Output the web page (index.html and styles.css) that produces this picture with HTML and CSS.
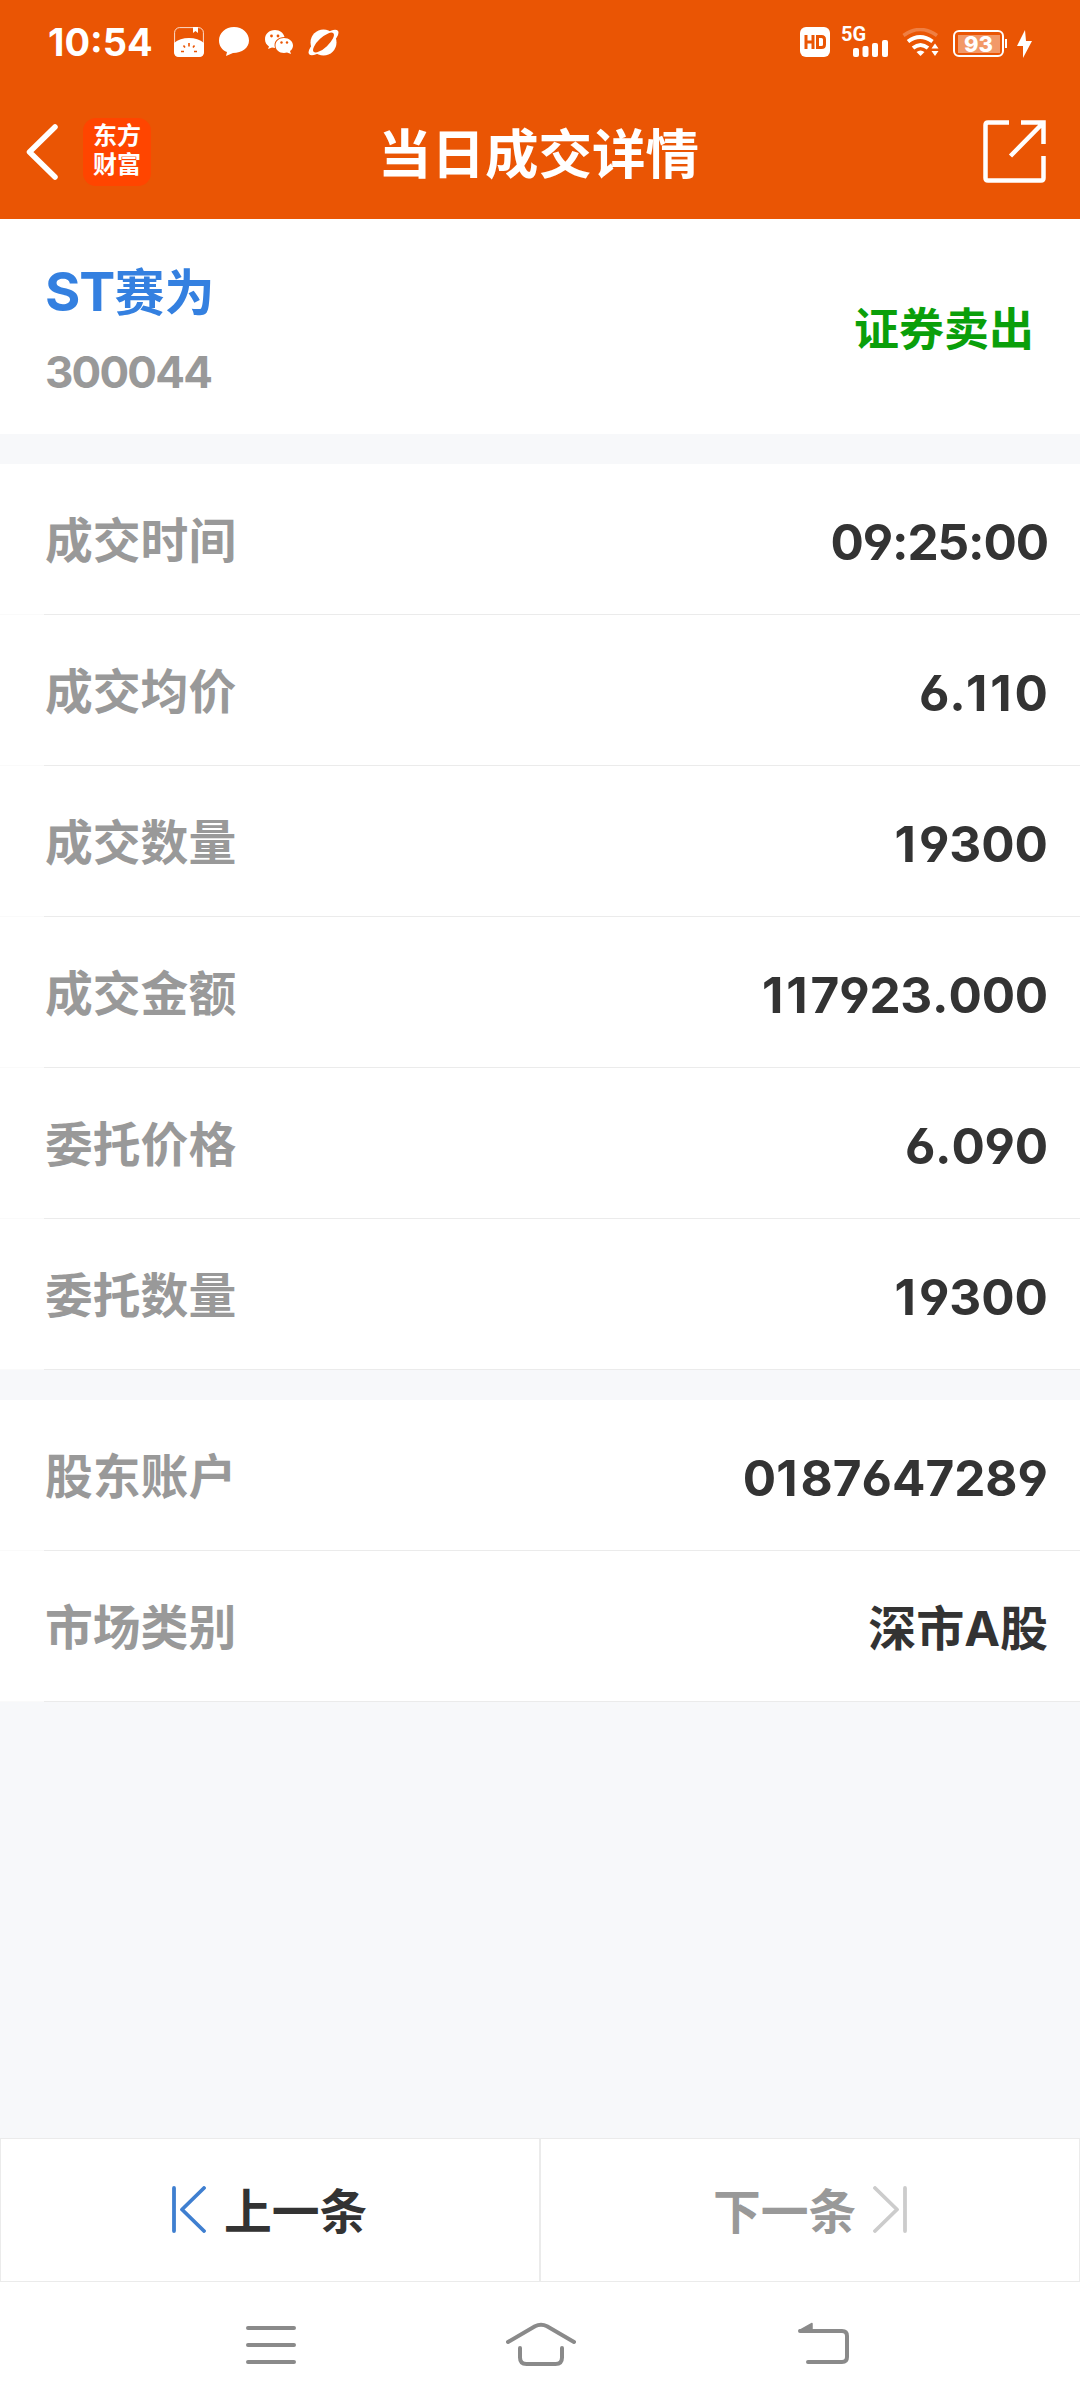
FILE: index.html
```html
<!DOCTYPE html>
<html lang="zh-CN">
<head>
<meta charset="utf-8">
<title>当日成交详情</title>
<link rel="stylesheet" href="styles.css">
</head>
<body>
<header class="header">
  <div class="status">
    <div class="status-left">
      <span class="clock">10:54</span>
      <svg width="30" height="30" viewBox="0 0 30 30"><rect x=".6" y=".6" width="28.8" height="28.8" rx="5" fill="none" stroke="#fff" stroke-opacity=".8"/><path d="M19 0h5v6l-2.500-2L19 6zM0 16Q6 11 15 11t15 5v9q0 5-5 5H5q-5 0-5-5z" fill="#fff"/><path d="M15 16v3.500M9.500 18.500l1.500 2M20.500 18.500l-1.500 2M7 24.500h3M20 24.500h3" stroke="#ea5504" stroke-width="1.600"/></svg>
      <svg width="30" height="30" viewBox="0 0 30 30"><path d="M15 0C6.500 0 0 6 0 13.500 0 19 3 23 8 25l-1 4 7-3C23 26 30 21 30 13.500 30 6 23.500 0 15 0z" fill="#fff"/></svg>
      <svg width="30" height="30" viewBox="0 0 30 30"><path d="M11 3C5 3 1 7 1 12.200c0 3 1.500 5.600 4 7.300L4 22l4-1.500 3 .4c-2-7 3-11 9.500-11C19.500 6 16 3 11 3z" fill="#fff"/><path d="M20 11c-5 0-8.500 3.300-8.500 7.500s3.500 7.500 8.500 7.500l3-.5 4 1.500-1-3c2-1.300 3-3.300 3-5.500 0-4.200-4-7.500-9-7.500z" fill="#fff"/><g fill="#ea5504"><circle cx="7.500" cy="9" r="1.400"/><circle cx="14" cy="9" r="1.400"/><circle cx="17.500" cy="15.500" r="1.200"/><circle cx="23" cy="15.500" r="1.200"/></g></svg>
      <svg class="planet" width="32" height="30" viewBox="0 0 32 30"><circle cx="15.500" cy="15.500" r="13" fill="#fff"/><ellipse cx="15.500" cy="15.500" rx="18.500" ry="6.500" transform="rotate(-39 15.500 15.500)" fill="#fff"/><ellipse cx="15.500" cy="15.500" rx="13.500" ry="5" transform="rotate(-43 15.500 15.500)" fill="#ea5504"/></svg>
    </div>
    <div class="status-right">
      <svg class="hd" width="30" height="30" viewBox="0 0 30 30"><rect width="30" height="30" rx="6" fill="#fff"/><path d="M6 8v14M13 8v14M6 15h7M17.500 9.500h4q3 0 3 3v5q0 3-3 3h-4z" fill="none" stroke="#ea5504" stroke-width="3"/></svg>
      <div class="cell"><span class="cell-label">5G</span>
        <svg width="36" height="17" viewBox="0 0 36 17" fill="#fff"><rect y="8" width="6" height="9" rx="2"/><rect x="9.500" y="6" width="6" height="11" rx="2"/><rect x="19" y="3" width="6" height="14" rx="2"/><rect x="29" width="6" height="17" rx="2"/></svg></div>
      <svg class="wifi" width="38" height="29" viewBox="0 0 38 29" fill="none" stroke="#fff" stroke-width="4"><path d="M1.500 7.500Q18-4.500 35 7.500" stroke-opacity=".25" stroke-width="3.500"/><path d="M6 13.500q12-9 24.500 0M11 20q7.500-6 15 0"/><path d="M14.500 24q4-3 8 0l-4 4zM29.500 20.500l3.500-5 3.500 5zM29.500 23l3.500 5 3.500-5z" fill="#fff" stroke="none"/></svg>
      <div class="battery"><span class="battery-level">93</span></div><i class="battery-tip"></i>
      <svg class="bolt" width="15" height="28" viewBox="0 0 15 28"><path d="M8 0L0 16h6v12l9-17H9z" fill="#fff"/></svg>
    </div>
  </div>
  <div class="titlebar">
    <svg class="back" width="33" height="56" viewBox="0 0 33 56"><path d="M29 3L3.500 28 29 53" fill="none" stroke="#fff" stroke-width="5.500" stroke-linecap="round" stroke-linejoin="round"/></svg>
    <div class="logo">东方<br>财富</div>
    <h1 class="title">当日成交详情</h1>
    <svg class="share" width="64" height="64" viewBox="0 0 64 64" fill="none" stroke="#fff" stroke-width="4.500"><path d="M26 2.500H5q-2.500 0-2.500 2.500v53q0 2.500 2.500 2.500h53q2.500 0 2.500-2.500V36M38 2.500h22.500V24M60 3L27.500 36"/></svg>
  </div>
</header>
<section class="summary">
  <div><div class="name"><span class="prefix">ST</span>赛为</div><div class="code">300044</div></div>
  <div class="side">证券卖出</div>
</section>
<section class="group">
  <div class="row"><span class="label">成交时间</span><span class="value time">09:25:00</span></div>
  <div class="row"><span class="label">成交均价</span><span class="value">6.<i>11</i>0</span></div>
  <div class="row"><span class="label">成交数量</span><span class="value"><i>1</i>9300</span></div>
  <div class="row"><span class="label">成交金额</span><span class="value amount"><i>11</i>7923.000</span></div>
  <div class="row"><span class="label">委托价格</span><span class="value amount">6.090</span></div>
  <div class="row"><span class="label">委托数量</span><span class="value"><i>1</i>9300</span></div>
</section>
<section class="group">
  <div class="row"><span class="label">股东账户</span><span class="value">0<i>1</i>87647289</span></div>
  <div class="row"><span class="label">市场类别</span><span class="value market">深市A股</span></div>
</section>
<div class="pager">
  <div class="page-button prev">
    <svg width="34" height="47" viewBox="0 0 34 47" fill="none" stroke="#3f7fd0" stroke-width="3.800" stroke-linecap="round" stroke-linejoin="round"><path d="M2 2v43M32 2L10 23.500 32 45"/></svg><span>上一条</span>
  </div>
  <div class="page-button next">
    <span>下一条</span><svg width="34" height="47" viewBox="0 0 34 47" fill="none" stroke="#ccc" stroke-width="3.800" stroke-linecap="round" stroke-linejoin="round"><path d="M32 2v43M2 2l22 21.500L2 45"/></svg>
  </div>
</div>
<nav class="nav">
  <svg width="50" height="46" viewBox="0 0 50 46"><path d="M2 7h46M2 24h46M2 41h46"/></svg>
  <svg class="home" width="70" height="46" viewBox="0 0 70 46"><path d="M2 21L29 5.300q6-3 12 0L68 21M14 27v9.500q0 6.500 6.500 6.500h29q6.500 0 6.500-6.500V27"/></svg>
  <svg width="51" height="46" viewBox="0 0 51 46"><path d="M2 10h42q5 0 5 5v21q0 5-5 5H10"/><path class="arrow" d="M1.500 9.500L14 2.500v7z"/></svg>
</nav>
</body>
</html>
```
FILE: styles.css
```css
* { box-sizing: border-box; }
body {
  margin: 0;
  width: 1080px;
  height: 2408px;
  display: flex;
  flex-direction: column;
  background: #f7f8fa;
  color: #333;
  font-family: Inter, "Noto Sans CJK SC", sans-serif;
  font-weight: 700;
}
svg { display: block; flex: none; }
.header { height: 219px; background: #ea5504; color: #fff; flex: none; }
.status { height: 84px; display: flex; justify-content: space-between; padding: 27px 48px 0; }
.status-left, .status-right { display: flex; align-items: flex-start; }
.status-left { gap: 15px; }
.clock { width: 111px; font-size: 38px; line-height: 30px; white-space: nowrap; }
.planet { margin-left: -1px; }
.hd { margin-right: 11px; }
.cell { width: 49px; height: 30px; display: flex; flex-direction: column; margin-right: 12px; }
.cell-label { height: 14px; font-family: Roboto, sans-serif; font-size: 20px; line-height: 15px; }
.cell svg { margin-left: 12px; margin-top: -1px; }
.wifi { margin: 1px 13px 0 0; }
.battery { width: 51px; height: 27px; margin-top: 3px; padding: 2.500px; border: 2px solid #fff; border-radius: 6px; }
.battery-level { display: block; height: 18px; line-height: 18px; background: rgba(255,255,255,.4); font-size: 22px; text-align: center; font-weight: 800; }
.battery-tip { width: 2px; height: 9px; margin: 12px 10px 0 1px; background: #fff; }
.bolt { margin-top: 3px; }
.titlebar { height: 135px; display: grid; grid-template-columns: 57px 68px 1fr 64px; padding: 0 33px 0 26px; align-items: start; }
.back { margin-top: 40px; }
.logo { width: 68px; height: 68px; margin-top: 34px; padding-top: 3px; border-radius: 13px; background: #ff4500; text-align: center; font-size: 24px; line-height: 29px; font-weight: 700; }
.title { margin: 31px 0 0 227px; font-size: 53.500px; line-height: 80px; white-space: nowrap; }
.share { margin-top: 36px; }
.summary { height: 215px; flex: none; display: flex; justify-content: space-between; padding: 0 46px 0 45px; background: #fff; margin-bottom: 30px; }
.name { margin-top: 37px; font-size: 50px; line-height: 72px; color: #3480e0; }
.prefix { font-size: 54px; letter-spacing: -1px; }
.code { margin-top: 17px; font-size: 44px; line-height: 52px; letter-spacing: -1.800px; color: #999; }
.side { margin-top: 78px; font-size: 45px; line-height: 66px; color: #0a9f0a; }
.group { background: #fff; margin-bottom: 30px; flex: none; }
.row { height: 151px; display: flex; justify-content: space-between; align-items: center; padding: 0 32px 0 45px; border-bottom: 1px solid #ebebeb; border-image: linear-gradient(90deg, #fafafa 45px, #ebebeb 45px) 1; }
.label { font-size: 47.800px; color: #999; margin-bottom: 4px; }
.value { font-size: 49.500px; font-kerning: none; font-feature-settings: "cv03", "cv04"; margin-top: 5px; }
/* the digit 1 is set wider than its natural narrow advance */
.value i { font-style: normal; letter-spacing: 3px; }
.time { letter-spacing: -1.100px; }
.amount { letter-spacing: -.2px; }
.market { font-size: 48px; margin-top: -3px; }
.pager { margin-top: auto; height: 144px; display: flex; flex: none; }
.page-button { width: 540px; border: 1px solid #ebebeb; background: #fff; display: flex; align-items: flex-start; font-size: 47.800px; line-height: 72px; padding-top: 37px; }
.page-button svg { margin-top: 10px; }
.prev { padding-left: 171px; gap: 18px; }
.next { padding-left: 172px; gap: 17px; color: #999; }
.nav { height: 126px; flex: none; display: flex; justify-content: space-between; padding: 39px 231px 0 246px; background: #fff; }
.home { margin-right: 12px; }
.nav path { fill: none; stroke: #8a8a8a; stroke-width: 4; stroke-linecap: round; stroke-linejoin: round; }
.nav .arrow { fill: #8a8a8a; stroke-width: 1.500; }
```
